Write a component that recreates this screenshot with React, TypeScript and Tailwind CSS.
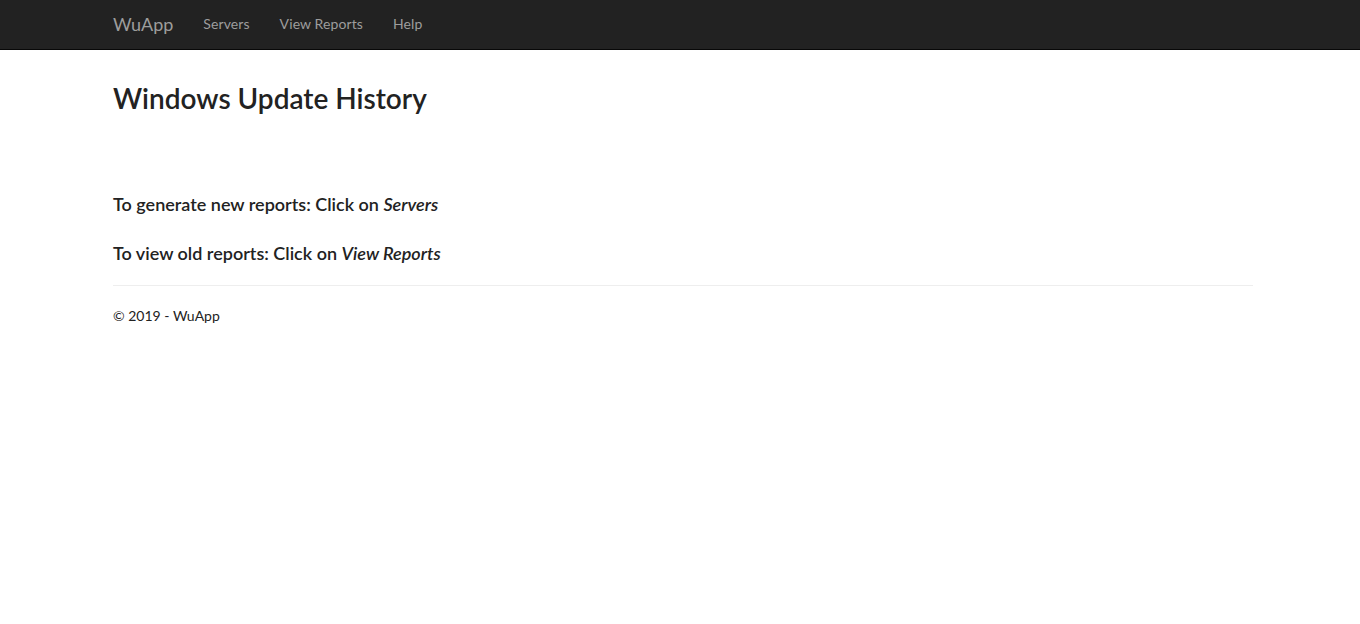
export default function App() {
  const navLinks = ["Servers", "View Reports", "Help"];

  return (
    <div className="min-h-screen bg-white font-['Lato','Liberation_Sans',sans-serif] text-[#222]">
      {/* Navbar */}
      <nav className="h-[50px] bg-[#222] border-b border-[#080808]">
        <div className="flex h-full items-center pb-[2px] pl-[113px] pr-[107px]">
          <a href="#" className="text-[18px] leading-[20px] text-[#9d9d9d]">
            WuApp
          </a>
          <ul className="ml-[15px] flex">
            {navLinks.map((link) => (
              <li key={link}>
                <a href="#" className="block px-[15px] text-[14px] leading-[20px] tracking-[0.1px] text-[#9d9d9d]">
                  {link}
                </a>
              </li>
            ))}
          </ul>
        </div>
      </nav>

      {/* Body */}
      <div className="pl-[113px] pr-[107px]">
        <h2 className="mt-[32px] text-[28px] font-semibold leading-[33px]">
          Windows Update History
        </h2>

        <h4 className="mt-[79px] text-[18px] font-semibold leading-[20px]">
          To generate new reports: Click on <em>Servers</em>
        </h4>
        <h4 className="mt-[29px] text-[18px] font-semibold leading-[20px]">
          To view old reports: Click on <em>View Reports</em>
        </h4>

        <hr className="mt-[22px] border-t border-[#eee]" />

        <footer className="mt-[20px]">
          <p className="text-[14px] leading-[20px]">&copy; 2019 - WuApp</p>
        </footer>
      </div>
    </div>
  );
}
